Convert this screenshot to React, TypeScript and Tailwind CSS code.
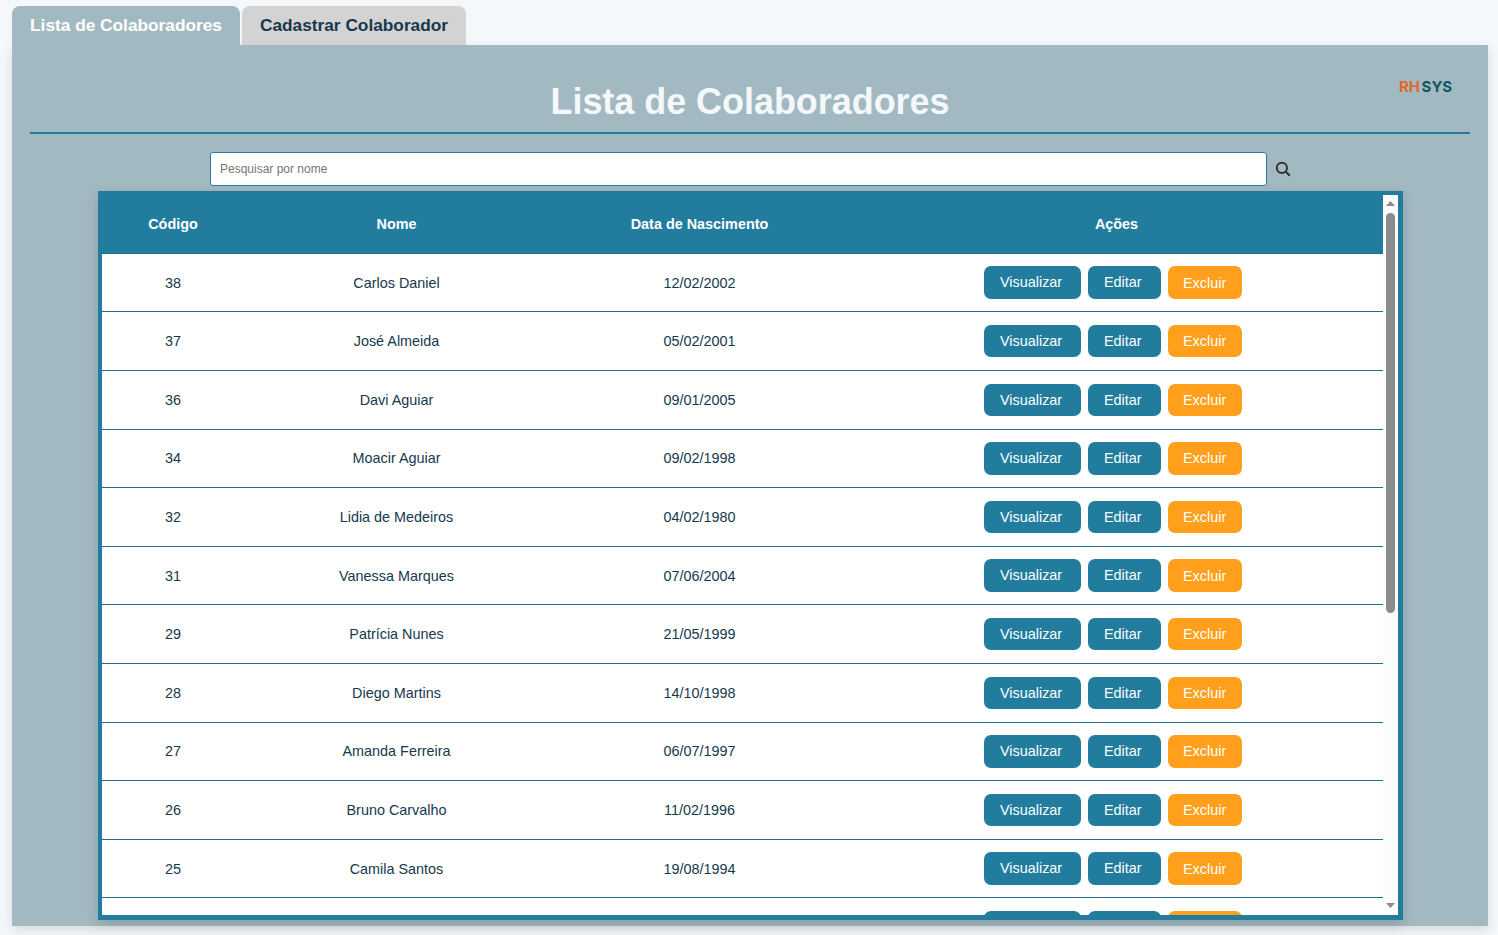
type Colaborador = { codigo: number; nome: string; nascimento: string };

const colaboradores: Colaborador[] = [
  { codigo: 38, nome: "Carlos Daniel", nascimento: "12/02/2002" },
  { codigo: 37, nome: "José Almeida", nascimento: "05/02/2001" },
  { codigo: 36, nome: "Davi Aguiar", nascimento: "09/01/2005" },
  { codigo: 34, nome: "Moacir Aguiar", nascimento: "09/02/1998" },
  { codigo: 32, nome: "Lidia de Medeiros", nascimento: "04/02/1980" },
  { codigo: 31, nome: "Vanessa Marques", nascimento: "07/06/2004" },
  { codigo: 29, nome: "Patrícia Nunes", nascimento: "21/05/1999" },
  { codigo: 28, nome: "Diego Martins", nascimento: "14/10/1998" },
  { codigo: 27, nome: "Amanda Ferreira", nascimento: "06/07/1997" },
  { codigo: 26, nome: "Bruno Carvalho", nascimento: "11/02/1996" },
  { codigo: 25, nome: "Camila Santos", nascimento: "19/08/1994" },
];

const columns = "grid grid-cols-[142px_305px_301px_533px] items-center text-center";

function Acoes() {
  return (
    <div className="mt-[0.1px] flex justify-center gap-[7px] pr-[7px] text-white">
      <button className="h-[32.4px] w-[97px] rounded-[7px] bg-[#227c9d] pl-4 text-left leading-[32.4px]">Visualizar</button>
      <button className="h-[32.4px] w-[73px] rounded-[7px] bg-[#227c9d] pl-4 text-left leading-[32.4px]">Editar</button>
      <button className="h-[32.4px] w-[74px] rounded-[7px] bg-[#ff9f1c] pt-[0.25px] pl-[15px] text-left leading-[32.4px]">Excluir</button>
    </div>
  );
}

function SearchIcon() {
  return (
    <svg className="mt-[9px] ml-2 size-4" viewBox="0 0 16 16" fill="none" stroke="#333333" strokeWidth="2">
      <circle cx="6.9" cy="6.9" r="5.1" />
      <path d="M10.6 10.6L14.8 14.8" strokeWidth="2.1" />
    </svg>
  );
}

function Scrollbar() {
  return (
    <div className="flex w-[15px] flex-none flex-col items-center bg-[#fcfcfc]">
      <svg className="mt-[6px] h-[5px] w-[9px] flex-none" viewBox="0 0 9 5">
        <path d="M4.5 0L9 5H0Z" fill="#8b8b8b" />
      </svg>
      <div className="mt-[7px] h-[400px] w-[9px] flex-none rounded-full bg-[#8b8b8b]" />
      <svg className="mt-auto mb-[7px] h-[5px] w-[9px] flex-none" viewBox="0 0 9 5">
        <path d="M0 0H9L4.5 5Z" fill="#8b8b8b" />
      </svg>
    </div>
  );
}

export default function App() {
  return (
    <div className="h-[935px] overflow-hidden bg-[#f4f8fb] pr-[10px] pl-3 pt-[6px] font-['Liberation_Sans',Arial,sans-serif] text-[14.4px] text-[#17384c]">
      <nav className="flex h-[39px] gap-[2px] text-[17.28px] font-bold">
        <button className="w-[228px] rounded-t-[8px] bg-[#a3b9c1] text-white">Lista de Colaboradores</button>
        <button className="w-[224px] rounded-t-[8px] bg-[#d3d3d3]">Cadastrar Colaborador</button>
      </nav>
      <main className="h-[881px] bg-[#a3b9c1] px-[18px] shadow-[0_4px_12px_rgba(0,0,0,0.12)]">
        <header className="relative flex h-[89px] items-center justify-center border-b-2 border-[#227c9d] pt-[26px]">
          <h1 className="text-[36px] leading-[42px] font-bold tracking-[-0.05px] text-[#f4f8fb]">Lista de Colaboradores</h1>
          <div className="absolute top-[32px] right-[17px] flex w-[54px] gap-[1.5px] font-['Inter',sans-serif] text-[15px] leading-[20px] font-bold">
            <span className="text-[#e4662b]">RH</span>
            <span className="text-[#0d5761]">SYS</span>
          </div>
        </header>
        <div className="ml-[180px] flex h-[52px] items-start pt-[18px]">
          <input
            placeholder="Pesquisar por nome"
            className="h-[34px] w-[1057px] flex-none rounded-[3px] border border-[#227c9d] bg-white px-[9px] text-[12px] placeholder:text-[#757575]"
          />
          <SearchIcon />
        </div>
        <section className="mt-[5px] ml-[68px] flex h-[729px] w-[1305px] overflow-hidden border-4 border-r-[5px] border-b-[5px] border-[#227c9d] bg-white shadow-[0_4px_12px_rgba(0,0,0,0.15)]">
          <div className="w-[1281px] flex-none overflow-hidden">
            <div className={`${columns} h-[58.75px] border-b border-[#1f6f8c] bg-[#227c9d] pt-[2px] font-bold text-white`}>
              <span>Código</span>
              <span>Nome</span>
              <span>Data de Nascimento</span>
              <span>Ações</span>
            </div>
            {colaboradores.map((c) => (
              <div key={c.codigo} className={`${columns} h-[58.6px] border-b border-[#1f6f8c]`}>
                <span className="pt-[1.7px]">{c.codigo}</span>
                <span className="pt-[1.7px]">{c.nome}</span>
                <span className="pt-[1.7px]">{c.nascimento}</span>
                <Acoes />
              </div>
            ))}
            <div className={`${columns} h-[58.6px] border-b border-[#1f6f8c]`}>
              <div className="col-start-4">
                <Acoes />
              </div>
            </div>
          </div>
          <Scrollbar />
        </section>
      </main>
    </div>
  );
}
